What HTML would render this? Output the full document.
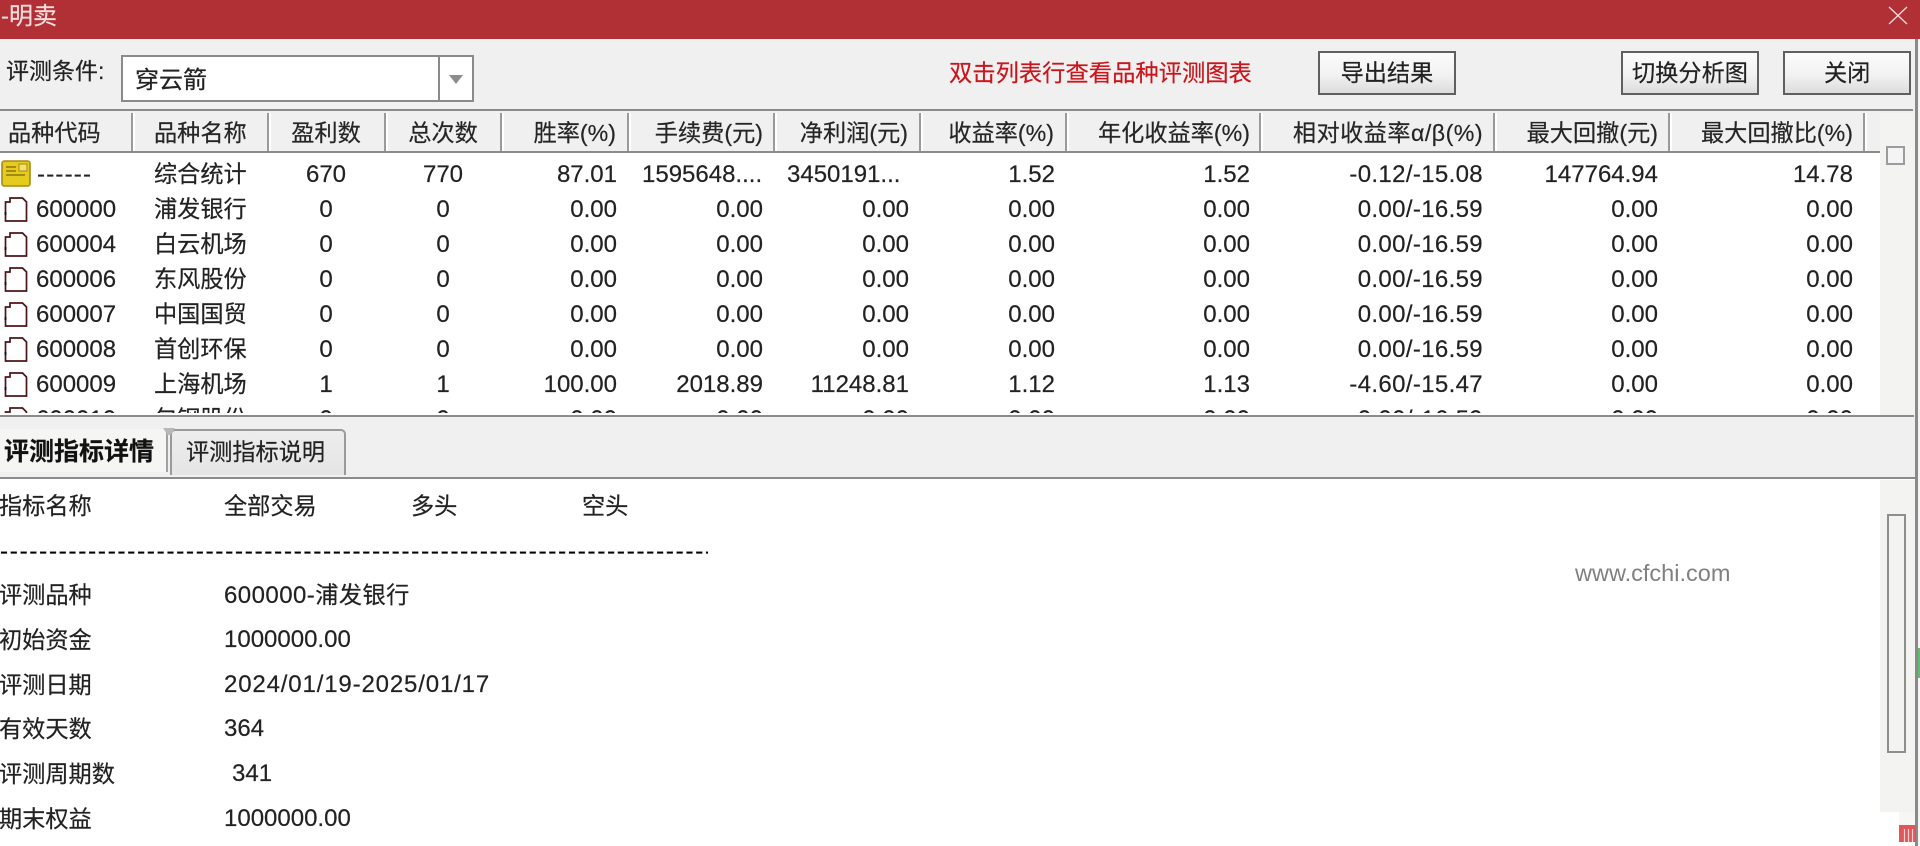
<!DOCTYPE html>
<html lang="zh">
<head>
<meta charset="utf-8">
<title>-明卖</title>
<style>
html,body{margin:0;padding:0;width:1920px;height:846px;overflow:hidden;background:#fff}
body{position:relative;font-family:"Liberation Sans","Noto Sans CJK SC",sans-serif;color:#222;font-size:23px;-webkit-text-stroke:.2px}
div,span,svg{position:absolute;display:block;white-space:nowrap}
.l{background:#8b8b8b}
.h{top:113px;height:38px;line-height:40px;font-size:23.2px;color:#262626}
.sep{top:113px;width:2px;height:38px;background:#9a9a9a;box-shadow:2px 0 0 #fff}
.r{height:35px;left:0;width:1880px;font-size:24px;line-height:35px}
.r span{top:0}
.a{left:36px}
.b{left:154px;font-size:23.2px}
.c{left:266px;width:120px;text-align:center}
.d{left:383px;width:120px;text-align:center}
.e{left:0;width:617px;text-align:right}
.f{left:0;width:763px;text-align:right}
.g{left:0;width:909px;text-align:right}
.i{left:0;width:1055px;text-align:right}
.j{left:0;width:1250px;text-align:right}
.k{left:0;width:1483px;text-align:right;letter-spacing:.35px}
.m{left:0;width:1658px;text-align:right}
.n{left:0;width:1853px;text-align:right}
.ic{left:4px;top:5px}
.btn{top:51px;height:40px;border:2px solid #5f5f5f;background:linear-gradient(#fbfbfb,#f2f2f2 55%,#dcdcdc);text-align:center;line-height:41px;font-size:23.2px}
.t{font-size:23.2px;line-height:34px;height:34px}
.v{left:224px;font-size:24px;line-height:34px;height:34px}
</style>
</head>
<body>
<!-- title bar -->
<div style="left:0;top:0;width:1920px;height:39px;background:#b03035"></div>
<div style="left:1px;top:0;height:34px;line-height:34px;font-size:24px;color:#f3dcdc">-明卖</div>
<svg style="left:1887px;top:5px" width="22" height="21" viewBox="0 0 22 21"><path d="M2 2L20 19M20 2L2 19" stroke="#f0d8d8" stroke-width="1.4" fill="none"/></svg>

<!-- toolbar -->
<div style="left:0;top:39px;width:1915px;height:441px;background:#f0f0f0"></div>
<div style="left:6px;top:54px;line-height:34px;font-size:23px">评测条件:</div>
<div style="left:121px;top:55px;width:349px;height:43px;border:2px solid #8a8a8a;background:#fff"></div>
<div style="left:438px;top:56px;width:2px;height:45px;background:#8a8a8a"></div>
<svg style="left:449px;top:74px" width="14" height="11" viewBox="0 0 14 11"><path d="M0 1H14L7 10Z" fill="#8d8d8d"/></svg>
<div style="left:135px;top:64px;line-height:34px;font-size:24px">穿云箭</div>
<div style="left:949px;top:56px;line-height:34px;font-size:23.3px;color:#c9161d">双击列表行查看品种评测图表</div>
<div class="btn" style="left:1318px;width:134px">导出结果</div>
<div class="btn" style="left:1621px;width:134px">切换分析图</div>
<div class="btn" style="left:1783px;width:124px"><span style="left:39px;top:0">关闭</span></div>

<!-- table -->
<div class="l" style="left:0;top:109px;width:1913px;height:2px"></div>
<div style="left:0;top:153px;width:1880px;height:262px;background:#fff"></div>
<div style="left:1880px;top:113px;width:35px;height:302px;background:#f3f3f1"></div>
<div class="l" style="left:0;top:151px;width:1880px;height:2px"></div>
<div class="sep" style="left:131px"></div>
<div class="sep" style="left:267px"></div>
<div class="sep" style="left:384px"></div>
<div class="sep" style="left:500px"></div>
<div class="sep" style="left:627px"></div>
<div class="sep" style="left:773px"></div>
<div class="sep" style="left:919px"></div>
<div class="sep" style="left:1065px"></div>
<div class="sep" style="left:1259px"></div>
<div class="sep" style="left:1493px"></div>
<div class="sep" style="left:1668px"></div>
<div class="sep" style="left:1863px"></div>
<div class="h" style="left:8px">品种代码</div>
<div class="h" style="left:154px">品种名称</div>
<div class="h" style="left:266px;width:120px;text-align:center">盈利数</div>
<div class="h" style="left:383px;width:120px;text-align:center">总次数</div>
<div class="h" style="left:0;width:616px;text-align:right">胜率(%)</div>
<div class="h" style="left:0;width:763px;text-align:right">手续费(元)</div>
<div class="h" style="left:0;width:908px;text-align:right">净利润(元)</div>
<div class="h" style="left:0;width:1054px;text-align:right">收益率(%)</div>
<div class="h" style="left:0;width:1250px;text-align:right">年化收益率(%)</div>
<div class="h" style="left:0;width:1483px;text-align:right;letter-spacing:.45px">相对收益率α/β(%)</div>
<div class="h" style="left:0;width:1658px;text-align:right">最大回撤(元)</div>
<div class="h" style="left:0;width:1853px;text-align:right">最大回撤比(%)</div>
<!-- scroll thumb -->
<div style="left:1886px;top:146px;width:15px;height:15px;border:2px solid #9c9c9c;background:#f4f4f4"></div>

<div style="left:0;top:153px;width:1880px;height:260px;overflow:hidden">
  <div class="r" style="top:4px">
    <svg style="left:1px;top:3px" width="30" height="27" viewBox="0 0 30 27"><rect x="1" y="1" width="28" height="25" rx="2.5" fill="#e6cb1f" stroke="#a88a12" stroke-width="1.6"/><path d="M5 7H15M5 11H15M5 15H24" stroke="#8a7412" stroke-width="1.4"/><rect x="18" y="4" width="8" height="7" fill="#f1e070" stroke="#a88a12"/></svg>
    <span class="a" style="letter-spacing:1.2px;left:37px">------</span><span class="b">综合统计</span><span class="c">670</span><span class="d">770</span><span class="e">87.01</span><span style="left:642px">1595648....</span><span style="left:787px">3450191...</span><span class="i">1.52</span><span class="j">1.52</span><span class="k">-0.12/-15.08</span><span class="m">147764.94</span><span class="n">14.78</span>
  </div>
  <div class="r" style="top:39px">
    <svg class="ic" width="24" height="25" viewBox="0 0 24 25"><path d="M1.500 24V5H6V1H18.500L22.500 5V24Z" fill="#fff" stroke="#4c1518" stroke-width="1.700"/><path d="M1.500 15V18" stroke="#111" stroke-width="2"/></svg>
    <span class="a">600000</span><span class="b">浦发银行</span><span class="c">0</span><span class="d">0</span><span class="e">0.00</span><span class="f">0.00</span><span class="g">0.00</span><span class="i">0.00</span><span class="j">0.00</span><span class="k">0.00/-16.59</span><span class="m">0.00</span><span class="n">0.00</span>
  </div>
  <div class="r" style="top:74px">
    <svg class="ic" width="24" height="25" viewBox="0 0 24 25"><path d="M1.500 24V5H6V1H18.500L22.500 5V24Z" fill="#fff" stroke="#4c1518" stroke-width="1.700"/><path d="M1.500 15V18" stroke="#111" stroke-width="2"/></svg>
    <span class="a">600004</span><span class="b">白云机场</span><span class="c">0</span><span class="d">0</span><span class="e">0.00</span><span class="f">0.00</span><span class="g">0.00</span><span class="i">0.00</span><span class="j">0.00</span><span class="k">0.00/-16.59</span><span class="m">0.00</span><span class="n">0.00</span>
  </div>
  <div class="r" style="top:109px">
    <svg class="ic" width="24" height="25" viewBox="0 0 24 25"><path d="M1.500 24V5H6V1H18.500L22.500 5V24Z" fill="#fff" stroke="#4c1518" stroke-width="1.700"/><path d="M1.500 15V18" stroke="#111" stroke-width="2"/></svg>
    <span class="a">600006</span><span class="b">东风股份</span><span class="c">0</span><span class="d">0</span><span class="e">0.00</span><span class="f">0.00</span><span class="g">0.00</span><span class="i">0.00</span><span class="j">0.00</span><span class="k">0.00/-16.59</span><span class="m">0.00</span><span class="n">0.00</span>
  </div>
  <div class="r" style="top:144px">
    <svg class="ic" width="24" height="25" viewBox="0 0 24 25"><path d="M1.500 24V5H6V1H18.500L22.500 5V24Z" fill="#fff" stroke="#4c1518" stroke-width="1.700"/><path d="M1.500 15V18" stroke="#111" stroke-width="2"/></svg>
    <span class="a">600007</span><span class="b">中国国贸</span><span class="c">0</span><span class="d">0</span><span class="e">0.00</span><span class="f">0.00</span><span class="g">0.00</span><span class="i">0.00</span><span class="j">0.00</span><span class="k">0.00/-16.59</span><span class="m">0.00</span><span class="n">0.00</span>
  </div>
  <div class="r" style="top:179px">
    <svg class="ic" width="24" height="25" viewBox="0 0 24 25"><path d="M1.500 24V5H6V1H18.500L22.500 5V24Z" fill="#fff" stroke="#4c1518" stroke-width="1.700"/><path d="M1.500 15V18" stroke="#111" stroke-width="2"/></svg>
    <span class="a">600008</span><span class="b">首创环保</span><span class="c">0</span><span class="d">0</span><span class="e">0.00</span><span class="f">0.00</span><span class="g">0.00</span><span class="i">0.00</span><span class="j">0.00</span><span class="k">0.00/-16.59</span><span class="m">0.00</span><span class="n">0.00</span>
  </div>
  <div class="r" style="top:214px">
    <svg class="ic" width="24" height="25" viewBox="0 0 24 25"><path d="M1.500 24V5H6V1H18.500L22.500 5V24Z" fill="#fff" stroke="#4c1518" stroke-width="1.700"/><path d="M1.500 15V18" stroke="#111" stroke-width="2"/></svg>
    <span class="a">600009</span><span class="b">上海机场</span><span class="c">1</span><span class="d">1</span><span class="e">100.00</span><span class="f">2018.89</span><span class="g">11248.81</span><span class="i">1.12</span><span class="j">1.13</span><span class="k">-4.60/-15.47</span><span class="m">0.00</span><span class="n">0.00</span>
  </div>
  <div class="r" style="top:249px">
    <svg class="ic" width="24" height="25" viewBox="0 0 24 25"><path d="M1.500 24V5H6V1H18.500L22.500 5V24Z" fill="#fff" stroke="#4c1518" stroke-width="1.700"/></svg>
    <span class="a">600010</span><span class="b">包钢股份</span><span class="c">0</span><span class="d">0</span><span class="e">0.00</span><span class="f">0.00</span><span class="g">0.00</span><span class="i">0.00</span><span class="j">0.00</span><span class="k">0.00/-16.59</span><span class="m">0.00</span><span class="n">0.00</span>
  </div>
</div>

<!-- splitter and tabs -->
<div class="l" style="left:0;top:415px;width:1914px;height:2px"></div>
<div style="left:-4px;top:429px;width:170px;height:43px;background:#f5f5f4;border-right:2px solid #a0a0a0"></div>
<div style="left:4px;top:433px;line-height:38px;font-size:25px;font-weight:700;color:#111">评测指标详情</div>
<div style="left:170px;top:429px;width:172px;height:44px;background:linear-gradient(#ededed,#e5e5e5);border:2px solid #9a9a9a;border-bottom:0;border-radius:5px 5px 0 0"></div>
<svg style="left:163px;top:428px" width="12" height="7" viewBox="0 0 12 7"><path d="M0 0H12L7.500 7H4.500Z" fill="#b8b8b8"/></svg>
<div style="left:186px;top:433px;line-height:38px;font-size:23.2px">评测指标说明</div>

<!-- bottom area -->
<div class="l" style="left:0;top:477px;width:1915px;height:2px"></div>
<div style="left:0;top:479px;width:1915px;height:367px;background:#fff"></div>
<div style="left:1880px;top:480px;width:35px;height:332px;background:#f3f3f1"></div>
<div style="left:1899px;top:812px;width:16px;height:14px;background:#f6f6f4"></div>
<div style="left:1887px;top:514px;width:15px;height:235px;border:2px solid #8f8f8a;background:#f3f3f1"></div>
<div class="t" style="left:-1px;top:489px">指标名称</div>
<div class="t" style="left:224px;top:489px">全部交易</div>
<div class="t" style="left:411px;top:489px">多头</div>
<div class="t" style="left:582px;top:489px">空头</div>
<div style="left:0;top:535px;width:708px;overflow:hidden;font-size:24px;line-height:34px;height:34px;letter-spacing:1.8px;color:#000;-webkit-text-stroke:.3px">-------------------------------------------------------------------------</div>
<div class="t" style="left:-1px;top:578px">评测品种</div><div class="v" style="top:578px;letter-spacing:.45px">600000-<span style="position:static;display:inline;font-size:23.2px">浦发银行</span></div>
<div class="t" style="left:-1px;top:623px">初始资金</div><div class="v" style="top:623px">1000000.00</div>
<div class="t" style="left:-1px;top:668px">评测日期</div><div class="v" style="top:668px;letter-spacing:.85px">2024/01/19-2025/01/17</div>
<div class="t" style="left:-1px;top:712px">有效天数</div><div class="v" style="top:712px">364</div>
<div class="t" style="left:-1px;top:757px">评测周期数</div><div class="v" style="top:757px;left:232px">341</div>
<div class="t" style="left:-1px;top:802px">期末权益</div><div class="v" style="top:802px">1000000.00</div>
<div style="left:1575px;top:558px;font-size:23.5px;line-height:30px;color:#808080;-webkit-text-stroke:0">www.cfchi.com</div>

<!-- right edge -->
<div style="left:1915px;top:39px;width:3px;height:807px;background:#8a8a8a"></div>
<div style="left:1918px;top:39px;width:2px;height:807px;background:#f5f5f5"></div>
<div style="left:1918px;top:648px;width:2px;height:30px;background:#63bb70"></div>
<svg style="left:1899px;top:825px" width="17" height="17" viewBox="0 0 17 17"><rect width="17" height="17" fill="#e0565b"/><path d="M5.500 4V17M9.500 4V17M13.500 4V17" stroke="#f7d0d0" stroke-width="1.200"/></svg>
</body>
</html>
